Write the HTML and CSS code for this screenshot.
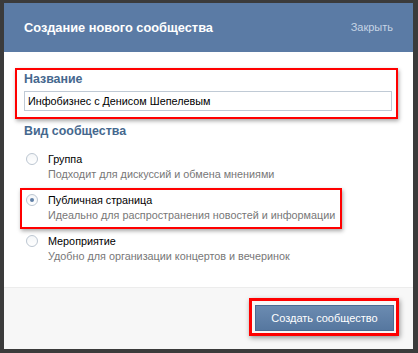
FILE: index.html
```html
<!DOCTYPE html>
<html lang="ru">
<head>
<meta charset="utf-8">
<link rel="stylesheet" href="styles.css">
</head>
<body>
<div class="dialog">
  <div class="header">
    <span class="title">Создание нового сообщества</span>
    <span class="close">Закрыть</span>
  </div>
  <div class="content">
    <div class="name-box">
      <div class="label">Название</div>
      <div class="input">Инфобизнес с Денисом Шепелевым</div>
    </div>
    <div class="label type-label">Вид сообщества</div>
    <div class="options">
      <div class="option">
        <span class="radio"></span>
        <div class="opt-text">
          <div class="opt-title">Группа</div>
          <div class="opt-desc">Подходит для дискуссий и обмена мнениями</div>
        </div>
      </div>
      <div class="option option-marked">
        <span class="radio checked"></span>
        <div class="opt-text">
          <div class="opt-title">Публичная страница</div>
          <div class="opt-desc">Идеально для распространения новостей и информации</div>
        </div>
      </div>
      <div class="option">
        <span class="radio"></span>
        <div class="opt-text">
          <div class="opt-title">Мероприятие</div>
          <div class="opt-desc">Удобно для организации концертов и вечеринок</div>
        </div>
      </div>
    </div>
  </div>
  <div class="footer">
    <div class="btn-mark"><button class="btn">Создать сообщество</button></div>
  </div>
</div>
</body>
</html>
```
FILE: styles.css
```css
html, body {
  margin: 0;
  padding: 0;
}
body {
  background: #3b3b3b;
  width: 418px;
  height: 353px;
  overflow: hidden;
  font-family: "Liberation Sans", Arial, sans-serif;
  font-size: 10.8px;
}
.dialog {
  margin: 3px 0 0 4px;
  width: 409px;
  height: 346px;
  background: #fff;
  display: flex;
  flex-direction: column;
}
.header {
  height: 49px;
  background: #5b7ba5;
  display: flex;
  align-items: center;
  justify-content: space-between;
  padding: 0 20px 1px 20px;
  box-sizing: border-box;
  flex-shrink: 0;
}
.title {
  color: #fff;
  font-weight: bold;
  font-size: 12.8px;
}
.close {
  color: #c5d3e4;
  font-size: 11px;
}
.content {
  flex: 1;
  padding: 16px 0 0 11px;
}
.name-box {
  box-sizing: border-box;
  width: 383px;
  border: 2px solid #ff0000;
  padding: 0 4px 6px 7px;
  box-shadow: 1px 2px 4px rgba(0, 0, 0, 0.35);
}
.label {
  color: #45688e;
  font-weight: bold;
  font-size: 12.4px;
  line-height: 18px;
}
.input {
  margin-top: 3px;
  height: 20px;
  box-sizing: border-box;
  width: 368px;
  border: 1px solid #c0cad5;
  padding: 0 3px;
  line-height: 18px;
  color: #000;
  white-space: nowrap;
}
.type-label {
  margin: 3px 0 0 9px;
}
.options {
  margin: 7px 0 0 5px;
  display: flex;
  flex-direction: column;
}
.option {
  display: flex;
  align-items: flex-start;
  gap: 10px;
  width: 322px;
  box-sizing: border-box;
  border: 2px solid transparent;
  padding: 3px 0 4px 4px;
  line-height: 15px;
}
.option-marked {
  border-color: #ff0000;
  box-shadow: 1px 2px 4px rgba(0, 0, 0, 0.35);
}
.radio {
  width: 12px;
  height: 12px;
  border: 1px solid #bcc6d1;
  border-radius: 50%;
  box-sizing: border-box;
  background: linear-gradient(#f4f6f8, #fff);
  margin-top: 1px;
  position: relative;
  flex-shrink: 0;
}
.radio.checked::after {
  content: "";
  position: absolute;
  left: 3px;
  top: 3px;
  width: 4px;
  height: 4px;
  border-radius: 50%;
  background: #5f7fa6;
}
.opt-text {
  white-space: nowrap;
}
.opt-title {
  color: #000;
}
.opt-desc {
  color: #777;
}
.footer {
  height: 62px;
  flex-shrink: 0;
  background: #f7f7f7;
  border-top: 1px solid #ececec;
  display: flex;
  justify-content: flex-end;
  align-items: flex-start;
  padding: 10px 14px 0 0;
  box-sizing: border-box;
}
.btn-mark {
  border: 3px solid #ff0000;
  padding: 4px 2px 2px 3px;
  box-shadow: 1px 2px 5px rgba(0, 0, 0, 0.4);
}
.btn {
  display: block;
  width: 139px;
  height: 26px;
  border: 1px solid #4a6b92;
  background: linear-gradient(#6b8bb1, #56779f);
  color: #fff;
  font-family: inherit;
  font-size: 11px;
  padding: 0;
}
```
